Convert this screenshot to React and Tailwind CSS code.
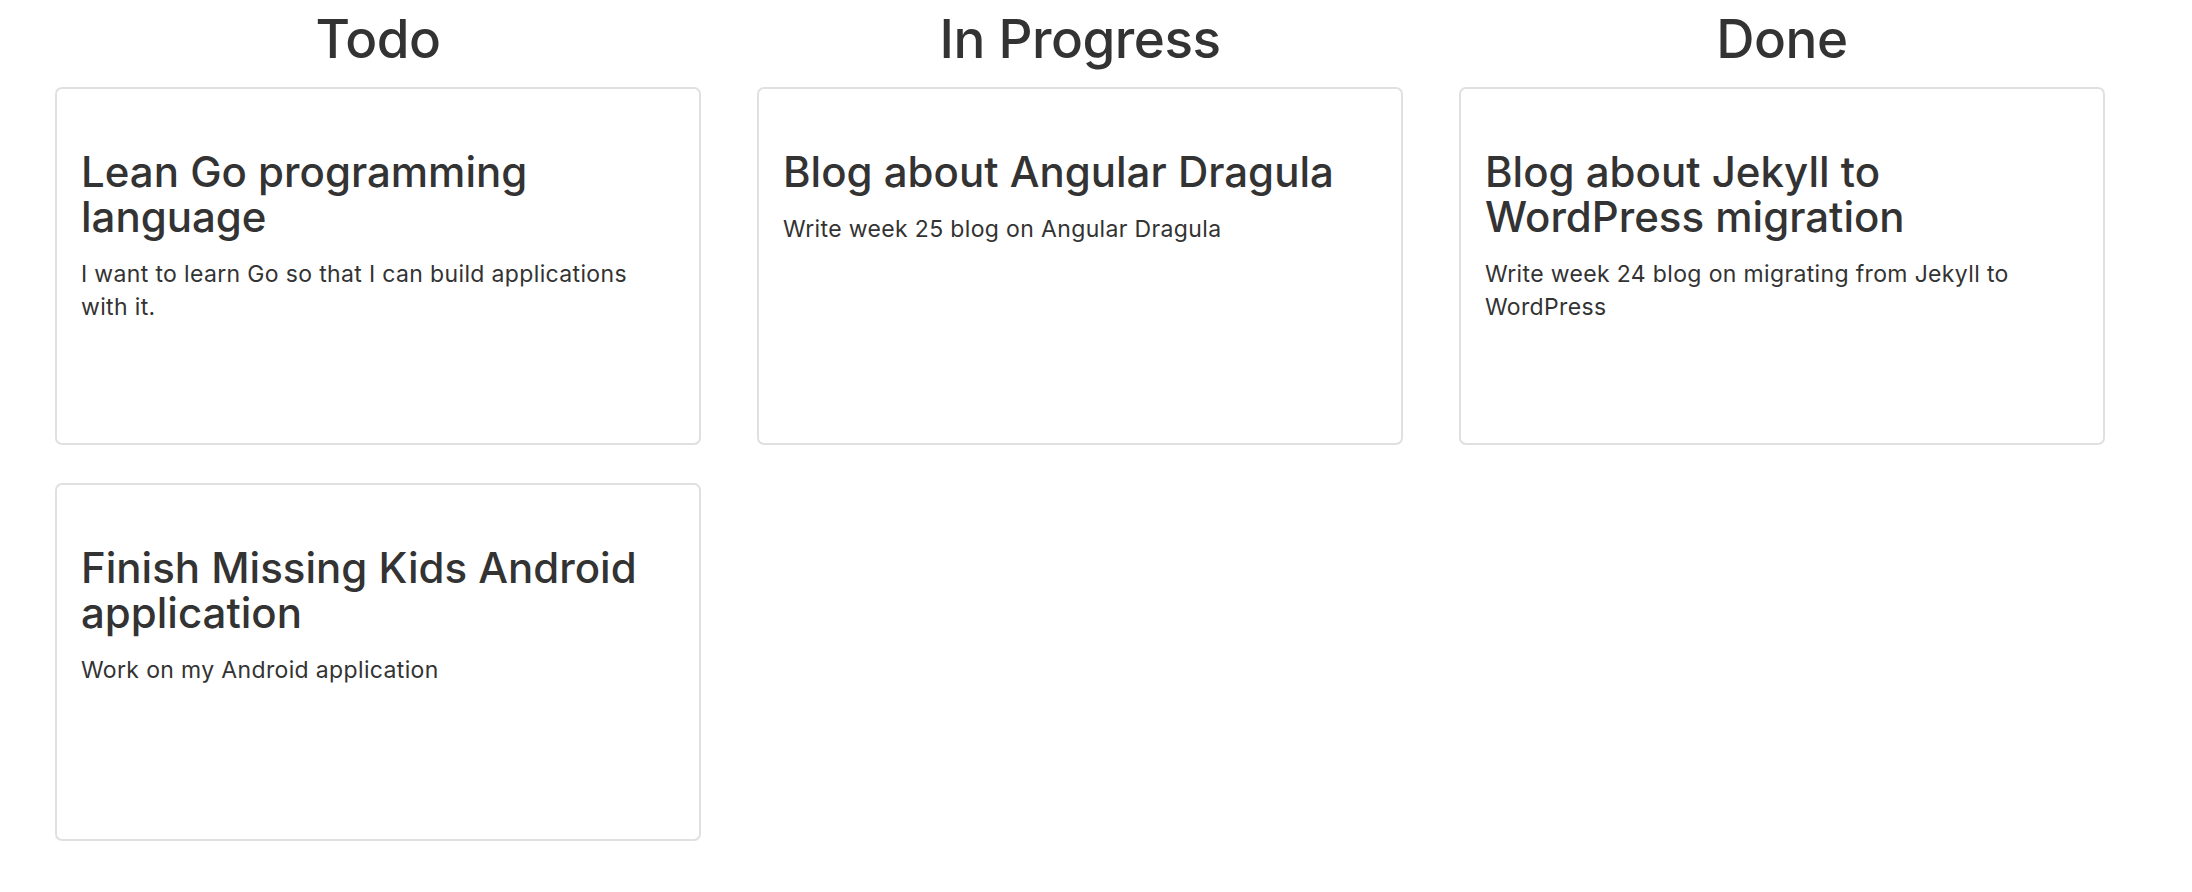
const columns = [
  {
    name: "Todo",
    tasks: [
      {
        title: "Lean Go programming language",
        body: "I want to learn Go so that I can build applications with it.",
      },
      {
        title: "Finish Missing Kids Android application",
        body: "Work on my Android application",
      },
    ],
  },
  {
    name: "In Progress",
    tasks: [
      {
        title: "Blog about Angular Dragula",
        body: "Write week 25 blog on Angular Dragula",
      },
    ],
  },
  {
    name: "Done",
    tasks: [
      {
        title: "Blog about Jekyll to WordPress migration",
        body: "Write week 24 blog on migrating from Jekyll to WordPress",
      },
    ],
  },
];

function TaskCard({ title, body }) {
  return (
    <div className="h-[358px] rounded-[7px] border-2 border-[#e0e0e0] bg-white px-[24px] pt-[60px]">
      <h3 className="text-[42px] font-medium leading-[45px]">{title}</h3>
      <p className="mt-[19px] text-[23px] leading-[33px] tracking-[0.35px]">{body}</p>
    </div>
  );
}

export default function App() {
  return (
    <div
      className="min-h-screen bg-white pl-[55px] text-[#333333]"
      style={{ fontFamily: 'Inter, "Liberation Sans", Arial, sans-serif' }}
    >
      <div className="flex gap-[56px]">
        {columns.map((col) => (
          <div key={col.name} className="w-[646px] shrink-0">
            <h1 className="pt-[10px] text-center text-[53px] font-medium leading-[59px] tracking-[-0.5px]">{col.name}</h1>
            <div className="mt-[18px] flex flex-col gap-[38px]">
              {col.tasks.map((t) => (
                <TaskCard key={t.title} title={t.title} body={t.body} />
              ))}
            </div>
          </div>
        ))}
      </div>
    </div>
  );
}
